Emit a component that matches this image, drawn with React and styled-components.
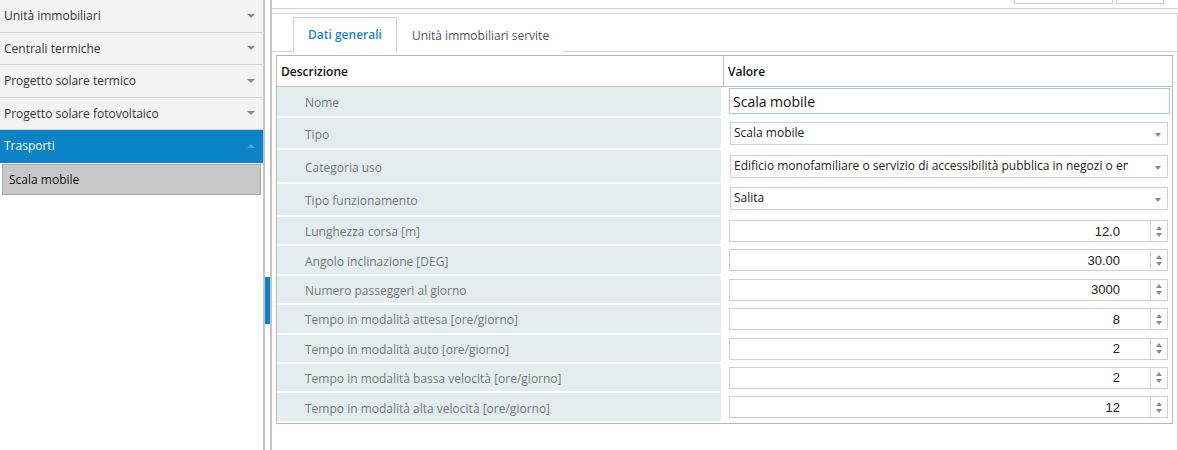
import React from "react";
import styled, { createGlobalStyle } from "styled-components";

const GlobalStyle = createGlobalStyle`
  html, body {
    margin: 0;
    padding: 0;
    background: #ffffff;
    overflow: hidden;
  }
  body {
    font-family: "Open Sans", "Noto Sans", sans-serif;
    font-size: 12px;
    color: #333333;
  }
`;

const Page = styled.div`
  display: flex;
  height: 450px;
  width: 1178px;
`;

const Sidebar = styled.div`
  width: 263px;
  flex: none;
  border-right: 2px solid #c4c4c4;
  background: #ffffff;
  overflow: hidden;
`;

const NavList = styled.div`
  display: flex;
  flex-direction: column;
`;

const NavItem = styled.div`
  height: 32.5px;
  box-sizing: border-box;
  display: flex;
  align-items: center;
  justify-content: space-between;
  padding: 0 8px 0 4px;
  border-bottom: 1px solid ${(p) => (p.active ? "#0a84c6" : "#d2d2d2")};
  background: ${(p) => (p.active ? "#0a84c6" : "#f3f3f3")};
  color: ${(p) => (p.active ? "#ffffff" : "#333333")};
`;

const Caret = styled.span`
  width: 0;
  height: 0;
  border-left: 4px solid transparent;
  border-right: 4px solid transparent;
  ${(p) =>
    p.up
      ? "border-bottom: 4px solid #4ea3d6;"
      : "border-top: 4px solid #8a8a8a;"}
`;

const SubItem = styled.div`
  margin: 1px 2px 0 2px;
  height: 31px;
  box-sizing: border-box;
  display: flex;
  align-items: center;
  padding-left: 6px;
  background: #c8c8c8;
  border: 1px solid #a9a9a9;
  color: #111111;
`;

const Splitter = styled.div`
  width: 5px;
  flex: none;
  padding-top: 277px;
`;

const SplitHandle = styled.div`
  height: 47px;
  background: #0a84c6;
`;

const Main = styled.div`
  flex: 1;
  display: flex;
  flex-direction: column;
  border-left: 2px solid #c4c4c4;
  min-width: 0;
`;

const TopBar = styled.div`
  height: 8px;
  flex: none;
  border-bottom: 1px solid #d6d6d6;
  display: flex;
  justify-content: flex-end;
  align-items: flex-start;
  gap: 3px;
  padding-right: 14px;
  margin-bottom: 4px;
`;

const TopButton = styled.div`
  width: ${(p) => p.w}px;
  height: 3px;
  border: 1px solid #cccccc;
  border-top: none;
`;

const Panel = styled.div`
  flex: 1;
  border-top: 1px solid #d6d6d6;
  border-right: 1px solid #d0d0d0;
  display: flex;
  flex-direction: column;
`;

const TabStrip = styled.div`
  height: 38px;
  flex: none;
  box-sizing: border-box;
  border-bottom: 1px solid #d0d0d0;
  display: flex;
  align-items: flex-end;
  padding-left: 21px;
`;

const Tab = styled.div`
  height: ${(p) => (p.active ? "35px" : "34px")};
  box-sizing: border-box;
  display: flex;
  align-items: center;
  justify-content: center;
  padding: ${(p) => (p.active ? "0 14px 1px" : "0 14px 1px")};
  min-width: ${(p) => (p.active ? "102px" : "0")};
  margin-bottom: -1px;
  background: #ffffff;
  border: 1px solid ${(p) => (p.active ? "#d0d0d0" : "transparent")};
  border-bottom: none;
  color: ${(p) => (p.active ? "#1a86c9" : "#555555")};
  font-weight: ${(p) => (p.active ? 600 : 400)};
`;

const Content = styled.div`
  padding: 3px 4px 0 4px;
`;

const Grid = styled.div`
  border: 1px solid #b8b8b8;
`;

const HeaderRow = styled.div`
  display: grid;
  grid-template-columns: 447px 1fr;
  height: 31px;
  box-sizing: border-box;
  border-bottom: 1px solid #bcbcbc;
`;

const HeaderCell = styled.div`
  display: flex;
  align-items: center;
  padding: 1px 0 0 4px;
  font-weight: 600;
  color: #111111;
  border-right: ${(p) => (p.first ? "1px solid #bcbcbc" : "none")};
`;

const Row = styled.div`
  display: grid;
  grid-template-columns: 444px 1fr;
  height: ${(p) => p.h}px;
  margin-bottom: 2px;
`;

const LabelCell = styled.div`
  background: #e4eded;
  display: flex;
  align-items: center;
  padding: 2px 0 0 28px;
  color: #777777;
`;

const ValueCell = styled.div`
  padding: 0 2px 0 8px;
  min-width: 0;
`;

const TextInput = styled.div`
  margin-top: 1px;
  height: 26px;
  box-sizing: border-box;
  border: 1px solid #8fd0ee;
  display: flex;
  align-items: center;
  padding: 1px 0 0 3px;
  font-size: 14px;
  color: #111111;
`;

const SelectBox = styled.div`
  margin: ${(p) => p.top}px 2px 0 1px;
  height: 23px;
  box-sizing: border-box;
  border: 1px solid #d0d0d0;
  display: flex;
  align-items: flex-start;
  justify-content: space-between;
  padding: 1px 6px 0 3px;
  color: #222222;
`;

const SelectText = styled.span`
  width: 394px;
  white-space: nowrap;
  overflow: hidden;
`;

const SelectArrow = styled.span`
  margin-top: 9px;
  width: 0;
  height: 0;
  border-left: 3.5px solid transparent;
  border-right: 3.5px solid transparent;
  border-top: 4px solid #8a8a8a;
`;

const NumberBox = styled.div`
  margin: 3px 2px 0 0;
  height: 22px;
  box-sizing: border-box;
  border: 1px solid #d0d0d0;
  display: flex;
`;

const NumberValue = styled.div`
  flex: 1;
  display: flex;
  align-items: center;
  justify-content: flex-end;
  padding-right: 30px;
  font-family: "Liberation Sans", Arial, sans-serif;
  font-size: 13px;
  color: #222222;
`;

const Spinner = styled.div`
  width: 16px;
  border-left: 1px solid #d0d0d0;
  display: flex;
  flex-direction: column;
  align-items: center;
  justify-content: center;
  gap: 3px;
`;

const SpinArrow = styled.span`
  width: 0;
  height: 0;
  border-left: 3.5px solid transparent;
  border-right: 3.5px solid transparent;
  ${(p) =>
    p.up
      ? "border-bottom: 4px solid #8a8a8a;"
      : "border-top: 4px solid #8a8a8a;"}
`;

const navItems = [
  "Unità immobiliari",
  "Centrali termiche",
  "Progetto solare termico",
  "Progetto solare fotovoltaico",
];

const selects = [
  { label: "Tipo", value: "Scala mobile", h: 30, top: 4 },
  {
    label: "Categoria uso",
    value:
      "Edificio monofamiliare o servizio di accessibilità pubblica in negozi o enti pubblici",
    h: 32,
    top: 5,
  },
  { label: "Tipo funzionamento", value: "Salita", h: 31, top: 3 },
];

const numbers = [
  { label: "Lunghezza corsa [m]", value: "12.0" },
  { label: "Angolo inclinazione [DEG]", value: "30.00" },
  { label: "Numero passeggeri al giorno", value: "3000" },
  { label: "Tempo in modalità attesa [ore/giorno]", value: "8" },
  { label: "Tempo in modalità auto [ore/giorno]", value: "2" },
  { label: "Tempo in modalità bassa velocità [ore/giorno]", value: "2" },
  { label: "Tempo in modalità alta velocità [ore/giorno]", value: "12" },
];

export default function App() {
  return (
    <>
      <GlobalStyle />
      <Page>
        <Sidebar>
          <NavList>
            {navItems.map((n) => (
              <NavItem key={n}>
                {n}
                <Caret />
              </NavItem>
            ))}
            <NavItem active>
              Trasporti
              <Caret up />
            </NavItem>
            <SubItem>Scala mobile</SubItem>
          </NavList>
        </Sidebar>
        <Splitter>
          <SplitHandle />
        </Splitter>
        <Main>
          <TopBar>
            <TopButton w={97} />
            <TopButton w={46} />
          </TopBar>
          <Panel>
            <TabStrip>
              <Tab active>Dati generali</Tab>
              <Tab>Unità immobiliari servite</Tab>
            </TabStrip>
            <Content>
              <Grid>
                <HeaderRow>
                  <HeaderCell first>Descrizione</HeaderCell>
                  <HeaderCell>Valore</HeaderCell>
                </HeaderRow>
                <Row h={29}>
                  <LabelCell>Nome</LabelCell>
                  <ValueCell>
                    <TextInput>Scala mobile</TextInput>
                  </ValueCell>
                </Row>
                {selects.map((s) => (
                  <Row h={s.h} key={s.label}>
                    <LabelCell>{s.label}</LabelCell>
                    <ValueCell>
                      <SelectBox top={s.top}>
                        <SelectText>{s.value}</SelectText>
                        <SelectArrow />
                      </SelectBox>
                    </ValueCell>
                  </Row>
                ))}
                {numbers.map((n) => (
                  <Row h={27.4} key={n.label}>
                    <LabelCell>{n.label}</LabelCell>
                    <ValueCell>
                      <NumberBox>
                        <NumberValue>{n.value}</NumberValue>
                        <Spinner>
                          <SpinArrow up />
                          <SpinArrow />
                        </Spinner>
                      </NumberBox>
                    </ValueCell>
                  </Row>
                ))}
              </Grid>
            </Content>
          </Panel>
        </Main>
      </Page>
    </>
  );
}
